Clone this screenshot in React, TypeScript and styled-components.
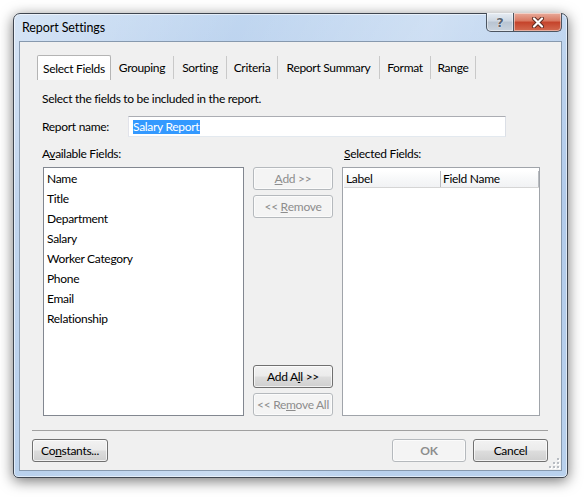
import React from 'react'
import styled, { createGlobalStyle } from 'styled-components'

const GlobalStyle = createGlobalStyle`
    html, body {
        margin: 0;
        padding: 0;
        background: #ffffff;
    }
    body {
        font-family: 'Lato', 'Noto Sans', sans-serif;
        font-size: 12px;
        letter-spacing: -0.3px;
        color: #000000;
    }
`

const Page = styled.div`
    width: 587px;
    height: 497px;
    padding: 13px;
    box-sizing: border-box;
`

const Window = styled.div`
    width: 555px;
    height: 465px;
    box-sizing: border-box;
    display: flex;
    flex-direction: column;
    padding: 0 5px 6px 5px;
    border: 1px solid #3f4650;
    border-radius: 7px 7px 5px 5px;
    background:
        linear-gradient(115deg, rgba(255,255,255,0.35) 0%, rgba(255,255,255,0) 30%, rgba(255,255,255,0.25) 55%, rgba(255,255,255,0) 75%),
        linear-gradient(180deg, #c0d6f0 0%, #b2cbea 40%, #b9d1ed 100%);
    box-shadow: inset 0 0 0 1px rgba(255,255,255,0.55), 0 3px 14px rgba(0,0,0,0.55);
`

const TitleBar = styled.div`
    height: 27px;
    display: flex;
    align-items: flex-start;
    justify-content: space-between;
`

const Title = styled.div`
    padding: 6px 0 0 3px;
    font-size: 12.5px;
    letter-spacing: -0.1px;
    color: #000;
`

const CaptionButtons = styled.div`
    display: flex;
    margin-top: -1px;
`

const CaptionButton = styled.div<{ $close?: boolean }>`
    width: ${p => (p.$close ? '48px' : '28px')};
    height: 19px;
    box-sizing: border-box;
    display: flex;
    align-items: center;
    justify-content: center;
    border: 1px solid #4c5561;
    border-top: none;
    border-left: ${p => (p.$close ? 'none' : '1px solid #4c5561')};
    border-radius: ${p => (p.$close ? '0 0 5px 0' : '0 0 0 5px')};
    background: ${p => p.$close
        ? 'linear-gradient(180deg, #e9ab9b 0%, #d8775f 45%, #c5422a 50%, #d36b50 100%)'
        : 'linear-gradient(180deg, #e6ecf3 0%, #cdd7e2 45%, #b8c4d2 50%, #c9d3de 100%)'};
    box-shadow: inset 0 0 0 1px rgba(255,255,255,0.45);
`

const HelpGlyph = styled.span`
    font-family: 'DejaVu Sans', sans-serif;
    font-weight: bold;
    font-size: 13px;
    line-height: 1;
    letter-spacing: 0;
    color: #5a6470;
    text-shadow: 0 0 1px #fff, 0 0 1px #fff;
`

const Client = styled.div`
    position: relative;
    flex: 1;
    display: flex;
    flex-direction: column;
    background: #f0f0f0;
    border: 1px solid #8799ae;
`

const TabStrip = styled.div`
    display: flex;
    align-items: flex-end;
    height: 25px;
    margin: 13px 0 0 17px;
`

const Tab = styled.div<{ $w: number; $active?: boolean }>`
    width: ${p => p.$w}px;
    height: ${p => (p.$active ? '25px' : '23px')};
    margin-bottom: ${p => (p.$active ? '0' : '1px')};
    box-sizing: border-box;
    display: flex;
    align-items: center;
    justify-content: center;
    border-right: 1px solid ${p => (p.$active ? '#b4b4b4' : '#c9c9c9')};
    ${p => p.$active && `
        border: 1px solid #b4b4b4;
        border-bottom: none;
        border-radius: 2px 2px 0 0;
        background: linear-gradient(180deg, #ffffff 0%, #fbfbfb 100%);
    `}
    white-space: nowrap;
`

const Intro = styled.div`
    margin: 12px 0 0 22px;
    height: 14px;
    line-height: 14px;
`

const NameRow = styled.div`
    display: flex;
    align-items: center;
    margin: 10px 0 0 22px;
`

const FieldLabel = styled.label`
    width: 86px;
`

const TextBox = styled.div`
    width: 378px;
    height: 21px;
    box-sizing: border-box;
    display: flex;
    align-items: center;
    padding-left: 4px;
    background: #fff;
    border: 1px solid #abadb3;
    border-left-color: #e2e3ea;
    border-right-color: #dbdfe6;
    border-bottom-color: #e3e9ef;
`

const Selection = styled.span`
    background: #3399ff;
    color: #fff;
    line-height: 14px;
    padding: 0 1px 0 0;
`

const FieldsGrid = styled.div`
    display: grid;
    grid-template-columns: 201px 80px 198px;
    grid-template-rows: 14px 249px;
    column-gap: 9px;
    row-gap: 6px;
    margin: 10px 0 0 23px;
`

const GridLabel = styled.div<{ $col: number; $shift?: number }>`
    grid-column: ${p => p.$col};
    grid-row: 1;
    line-height: 14px;
    margin-left: ${p => p.$shift ?? 0}px;
    white-space: nowrap;
`

const Key = styled.span`
    text-decoration: underline;
`

const ListBox = styled.div`
    grid-row: 2;
    box-sizing: border-box;
    background: #fff;
    border: 1px solid #828790;
    padding: 1px 0 0 3px;
`

const ListItem = styled.div`
    height: 20px;
    line-height: 20px;
`

const ListView = styled.div`
    grid-row: 2;
    box-sizing: border-box;
    background: #fff;
    border: 1px solid #a0a4aa;
    padding: 3px 1px 0 1px;
`

const HeaderRow = styled.div`
    display: flex;
    height: 17px;
    width: 195px;
    box-sizing: border-box;
    background: linear-gradient(180deg, #ffffff 0%, #f7f8f9 50%, #f1f2f4 100%);
    border-bottom: 1px solid #d5d5d5;
`

const HeaderCell = styled.div<{ $w: number }>`
    width: ${p => p.$w}px;
    box-sizing: border-box;
    padding-left: 2px;
    line-height: 16px;
    border-right: 1px solid #b9bcc0;
`

const ButtonColumn = styled.div`
    grid-row: 2;
    display: flex;
    flex-direction: column;
    justify-content: space-between;
`

const ButtonGroup = styled.div`
    display: flex;
    flex-direction: column;
    gap: 5px;
`

const Button = styled.div<{ $w?: number; $disabled?: boolean; $bold?: boolean }>`
    width: ${p => (p.$w ? `${p.$w}px` : 'auto')};
    height: 23px;
    box-sizing: border-box;
    display: flex;
    align-items: center;
    justify-content: center;
    border-radius: 3px;
    white-space: pre;
    font-weight: ${p => (p.$bold ? 'bold' : 'normal')};
    color: ${p => (p.$disabled ? '#8d8d8d' : '#000')};
    border: 1px solid ${p => (p.$disabled ? '#b5b9bd' : '#707070')};
    background: ${p => p.$disabled
        ? '#f4f4f4'
        : 'linear-gradient(180deg, #f2f2f2 0%, #ebebeb 48%, #dddddd 52%, #cfcfcf 100%)'};
    box-shadow: inset 0 0 0 1px ${p => (p.$disabled ? 'rgba(255,255,255,0.6)' : 'rgba(255,255,255,0.7)')};
`

const Separator = styled.div`
    height: 0;
    margin: 14px 13px 0 12px;
    border-top: 1px solid #a0a0a0;
`

const Footer = styled.div`
    display: flex;
    gap: 7px;
    margin: 8px 13px 0 12px;
`

const Spacer = styled.div`
    flex: 1;
`

const Grip = styled.svg`
    position: absolute;
    right: 1px;
    bottom: 1px;
`

const fields = ['Name', 'Title', 'Department', 'Salary', 'Worker Category', 'Phone', 'Email', 'Relationship']

const tabs: { label: string; w: number }[] = [
    { label: 'Select Fields', w: 74 },
    { label: 'Grouping', w: 63 },
    { label: 'Sorting', w: 53 },
    { label: 'Criteria', w: 51 },
    { label: 'Report Summary', w: 102 },
    { label: 'Format', w: 51 },
    { label: 'Range', w: 45 },
]

const CloseGlyph = () => (
    <svg width="14" height="11" viewBox="0 0 14 11">
        <path d="M3 1.5 L11 9.5 M11 1.5 L3 9.5" stroke="#5b2a20" strokeWidth="4" strokeLinecap="round" />
        <path d="M3 1.5 L11 9.5 M11 1.5 L3 9.5" stroke="#ffffff" strokeWidth="2.2" strokeLinecap="round" />
    </svg>
)

const App = () => {
    return (
        <Page>
            <GlobalStyle />
            <Window>
                <TitleBar>
                    <Title>Report Settings</Title>
                    <CaptionButtons>
                        <CaptionButton><HelpGlyph>?</HelpGlyph></CaptionButton>
                        <CaptionButton $close><CloseGlyph /></CaptionButton>
                    </CaptionButtons>
                </TitleBar>
                <Client>
                    <TabStrip>
                        {tabs.map((t, i) => (
                            <Tab key={t.label} $w={t.w} $active={i === 0}>{t.label}</Tab>
                        ))}
                    </TabStrip>
                    <Intro>Select the fields to be included in the report.</Intro>
                    <NameRow>
                        <FieldLabel>Report name:</FieldLabel>
                        <TextBox><Selection>Salary Report</Selection></TextBox>
                    </NameRow>
                    <FieldsGrid>
                        <GridLabel $col={1} $shift={-1}>A<Key>v</Key>ailable Fields:</GridLabel>
                        <GridLabel $col={3} $shift={2}><Key>S</Key>elected Fields:</GridLabel>
                        <ListBox>
                            {fields.map(f => <ListItem key={f}>{f}</ListItem>)}
                        </ListBox>
                        <ButtonColumn>
                            <ButtonGroup>
                                <Button $disabled><Key>A</Key>dd &gt;&gt;</Button>
                                <Button $disabled>{'<< '}<Key>R</Key>emove</Button>
                            </ButtonGroup>
                            <ButtonGroup>
                                <Button>Add A<Key>l</Key>l &gt;&gt;</Button>
                                <Button $disabled>{'<< Re'}<Key>m</Key>ove All</Button>
                            </ButtonGroup>
                        </ButtonColumn>
                        <ListView>
                            <HeaderRow>
                                <HeaderCell $w={97}>Label</HeaderCell>
                                <HeaderCell $w={98}>Field Name</HeaderCell>
                            </HeaderRow>
                        </ListView>
                    </FieldsGrid>
                    <Separator />
                    <Footer>
                        <Button $w={76}>Co<Key>n</Key>stants...</Button>
                        <Spacer />
                        <Button $w={74} $disabled $bold>OK</Button>
                        <Button $w={75}>Cancel</Button>
                    </Footer>
                    <Grip width="12" height="12" viewBox="0 0 12 12">
                        {[[9, 1], [9, 5], [5, 5], [9, 9], [5, 9], [1, 9]].map(([x, y]) => (
                            <g key={`${x}-${y}`}>
                                <rect x={x + 1} y={y + 1} width="2" height="2" fill="#ffffff" />
                                <rect x={x} y={y} width="2" height="2" fill="#b8bcc2" />
                            </g>
                        ))}
                    </Grip>
                </Client>
            </Window>
        </Page>
    )
}

export default App
